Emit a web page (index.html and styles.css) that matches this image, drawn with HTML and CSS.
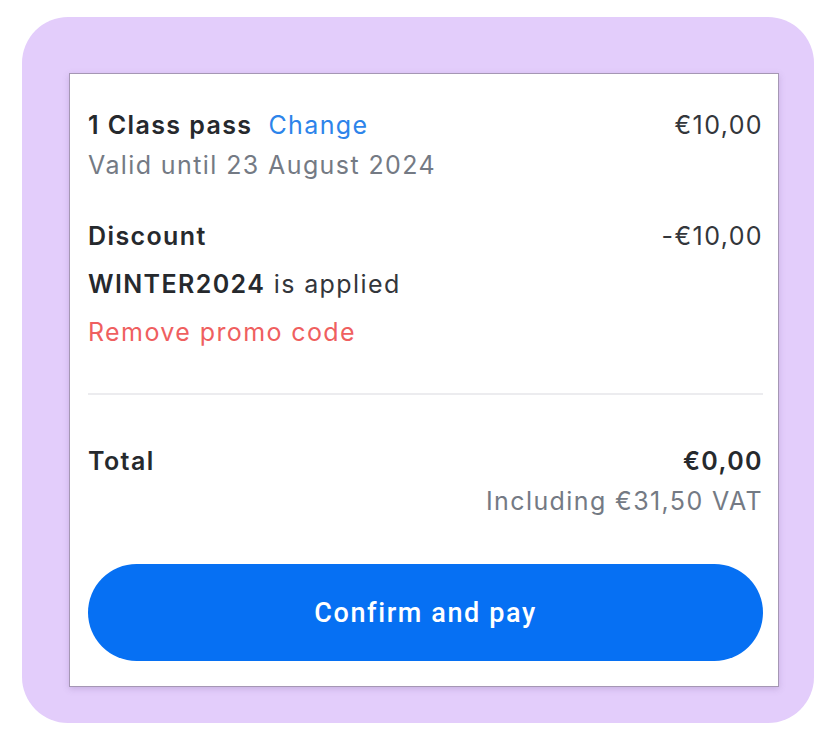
FILE: index.html
```html
<!DOCTYPE html>
<html lang="en">
<head>
  <meta charset="UTF-8" />
  <title>Order summary</title>
  <link rel="stylesheet" href="styles.css">
</head>
<body>
  <div class="frame">
    <div class="card">
      <div class="row">
        <div class="item">
          <span class="strong">1 Class pass</span>
          <a class="link" href="#">Change</a>
        </div>
        <div class="price">€10,00</div>
      </div>
      <div class="muted">Valid until 23 August 2024</div>

      <div class="discount">
        <div class="row">
          <span class="strong">Discount</span>
          <span class="price">-€10,00</span>
        </div>
        <div class="code"><span class="strong">WINTER2024</span> is applied</div>
        <a class="remove" href="#">Remove promo code</a>
      </div>

      <hr class="divider">

      <div class="row total">
        <span class="strong">Total</span>
        <span class="strong">€0,00</span>
      </div>
      <div class="muted right">Including €31,50 VAT</div>

      <button class="pay">Confirm and pay</button>
    </div>
  </div>
</body>
</html>
```

FILE: styles.css
```css
html, body {
  margin: 0;
  padding: 0;
}

body {
  background: #ffffff;
  font-family: Inter, "Noto Sans", sans-serif;
  color: #2b2e33;
}

.frame {
  margin: 17px 24px 21px 22px;
  height: 706px;
  background: #e3cdfb;
  border-radius: 46px;
  padding: 56px 35px 0 47px;
  box-sizing: border-box;
}

.card {
  width: 710px;
  background: #ffffff;
  border: 1px solid #a597b4;
  box-shadow: 0 2px 6px rgba(120, 90, 150, 0.25);
  padding: 31px 15px 25px 18px;
  box-sizing: border-box;
  font-size: 25px;
  letter-spacing: 1.4px;
}

.row {
  display: flex;
  justify-content: space-between;
  align-items: center;
  line-height: 40px;
}

.item {
  display: flex;
  gap: 16px;
}

.strong {
  font-weight: 600;
  color: #26292d;
}

.link {
  color: #2d84ea;
  text-decoration: none;
}

.price {
  color: #33363b;
}

.muted {
  line-height: 40px;
  color: #747a84;
}

.right {
  text-align: right;
}

.discount {
  margin-top: 27px;
  line-height: 48px;
}

.discount .row {
  line-height: 48px;
}

.code {
  color: #33363b;
}

.remove {
  display: block;
  color: #ef5f60;
  text-decoration: none;
}

.divider {
  border: none;
  border-top: 2px solid #ececef;
  margin: 37px 0 46px;
}

.pay {
  display: block;
  width: 100%;
  height: 97px;
  margin-top: 43px;
  border: none;
  border-radius: 49px;
  background: #0670f3;
  color: #ffffff;
  font-family: Roboto, "Noto Sans", sans-serif;
  font-size: 27px;
  font-weight: 500;
  letter-spacing: 1.6px;
  cursor: pointer;
}
```
